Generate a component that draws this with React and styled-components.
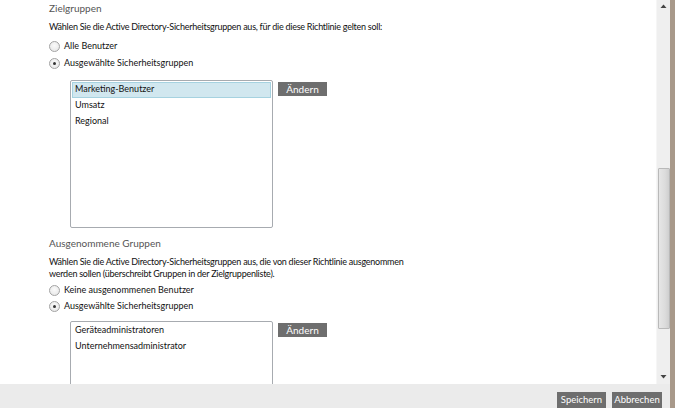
import React from "react";
import styled, { createGlobalStyle } from "styled-components";

const Global = createGlobalStyle`
  html, body { margin: 0; padding: 0; background: #fff; }
  body { font-family: Lato, "Noto Sans", sans-serif; overflow: hidden; }
  * { box-sizing: border-box; }
`;

const Shell = styled.div`
  display: flex;
  width: 675px;
  height: 408px;
`;

const MainColumn = styled.div`
  flex: 1;
  display: flex;
  flex-direction: column;
  min-width: 0;
`;

const ContentRow = styled.div`
  flex: 1;
  display: flex;
  min-height: 0;
`;

const Content = styled.div`
  flex: 1;
  overflow: hidden;
  padding: 0 0 0 49px;
  color: #111;
  font-size: 9px;
`;

const Heading = styled.div`
  color: #555;
  font-size: 10px;
  line-height: 14px;
  margin-top: ${(p) => p.$top}px;
`;

const Description = styled.div`
  margin-top: ${(p) => p.$top}px;
  line-height: 12px;
  white-space: nowrap;
  letter-spacing: -0.25px;
`;

const RadioGroup = styled.div`
  display: flex;
  flex-direction: column;
  gap: ${(p) => p.$gap}px;
  margin-top: ${(p) => p.$top}px;
`;

const RadioRow = styled.label`
  display: flex;
  align-items: center;
  gap: 4px;
  height: 12px;
  line-height: 12px;
`;

const RadioCircle = styled.span`
  width: 11px;
  height: 11px;
  border-radius: 50%;
  border: 1px solid #a3a3a3;
  background: radial-gradient(circle at 50% 40%, #fafafa 0%, #e4e4e4 100%);
  display: flex;
  align-items: center;
  justify-content: center;
  &::after {
    content: "";
    width: 3px;
    height: 3px;
    border-radius: 50%;
    background: ${(p) => (p.$checked ? "#333" : "transparent")};
  }
`;

const ListRow = styled.div`
  display: flex;
  align-items: flex-start;
  gap: 5px;
  margin-top: ${(p) => p.$top}px;
  margin-left: 21px;
`;

const ListBox = styled.div`
  width: 203px;
  height: ${(p) => p.$height}px;
  border: 1px solid #a7abb0;
  border-radius: 2px;
  padding: 1px;
  background: #fff;
  flex-shrink: 0;
`;

const ListItem = styled.div`
  height: 16px;
  line-height: 12px;
  padding-left: 2px;
  border: 1px solid ${(p) => (p.$selected ? "#a6d2e0" : "transparent")};
  background: ${(p) => (p.$selected ? "#d1e7ef" : "transparent")};
`;

const GrayButton = styled.button`
  border: none;
  background: #6e6e6e;
  color: #fff;
  font-family: Lato, "Noto Sans", sans-serif;
  font-size: 10px;
  height: 14px;
  line-height: 14px;
  padding: 0;
  width: ${(p) => p.$width}px;
  margin-top: ${(p) => p.$top || 0}px;
  cursor: pointer;
`;

const ScrollTrack = styled.div`
  width: 14px;
  background: #efefef;
  display: flex;
  flex-direction: column;
  align-items: center;
  padding-top: 2px;
  border-left: 1px solid #f6f6f6;
`;

const ScrollArrow = styled.div`
  height: 9px;
  display: flex;
  align-items: center;
  justify-content: center;
`;

const ScrollSpacer = styled.div`
  height: ${(p) => p.$h}px;
`;

const ScrollThumb = styled.div`
  width: 12px;
  height: 161px;
  border: 1px solid #b9b9b9;
  border-radius: 1px;
  background: linear-gradient(to right, #e6e6e6, #dcdcdc 60%, #cfcfcf);
`;

const Footer = styled.div`
  height: 24px;
  background: #ebebeb;
  display: flex;
  justify-content: flex-end;
  align-items: flex-end;
  gap: 6px;
  padding-right: 8px;
`;

const FooterButton = styled(GrayButton)`
  height: 16px;
  line-height: 16px;
  font-size: 9.5px;
`;

const EdgeStrip = styled.div`
  width: 5px;
  background: #a8998a;
`;

const Arrow = ({ up }) => (
  <svg width="7" height="5" viewBox="0 0 7 5">
    {up ? <path d="M3.5 0.5 L6.5 4 L0.5 4 Z" fill="#444" /> : <path d="M0.5 1 L6.5 1 L3.5 4.5 Z" fill="#444" />}
  </svg>
);

const Radio = ({ checked, children }) => (
  <RadioRow>
    <RadioCircle $checked={checked} />
    <span>{children}</span>
  </RadioRow>
);

export default function App() {
  return (
    <>
      <Global />
      <Shell>
        <MainColumn>
          <ContentRow>
            <Content>
              <Heading $top={1}>Zielgruppen</Heading>
              <Description $top={6}>
                Wählen Sie die Active Directory-Sicherheitsgruppen aus, für die diese Richtlinie gelten soll:
              </Description>
              <RadioGroup $top={7} $gap={5}>
                <Radio>Alle Benutzer</Radio>
                <Radio checked>Ausgewählte Sicherheitsgruppen</Radio>
              </RadioGroup>
              <ListRow $top={11}>
                <ListBox $height={148}>
                  <ListItem $selected>Marketing-Benutzer</ListItem>
                  <ListItem>Umsatz</ListItem>
                  <ListItem>Regional</ListItem>
                </ListBox>
                <GrayButton $width={49} $top={2}>Ändern</GrayButton>
              </ListRow>
              <Heading $top={8}>Ausgenommene Gruppen</Heading>
              <Description $top={6}>
                Wählen Sie die Active Directory-Sicherheitsgruppen aus, die von dieser Richtlinie ausgenommen
                <br />
                werden sollen (überschreibt Gruppen in der Zielgruppenliste).
              </Description>
              <RadioGroup $top={4} $gap={4}>
                <Radio>Keine ausgenommenen Benutzer</Radio>
                <Radio checked>Ausgewählte Sicherheitsgruppen</Radio>
              </RadioGroup>
              <ListRow $top={9}>
                <ListBox $height={148}>
                  <ListItem>Geräteadministratoren</ListItem>
                  <ListItem>Unternehmensadministrator</ListItem>
                </ListBox>
                <GrayButton $width={49} $top={2}>Ändern</GrayButton>
              </ListRow>
            </Content>
            <ScrollTrack>
              <ScrollArrow><Arrow up /></ScrollArrow>
              <ScrollSpacer $h={157} />
              <ScrollThumb />
              <ScrollSpacer $h={43} />
              <ScrollArrow><Arrow /></ScrollArrow>
            </ScrollTrack>
          </ContentRow>
          <Footer>
            <FooterButton $width={49}>Speichern</FooterButton>
            <FooterButton $width={50}>Abbrechen</FooterButton>
          </Footer>
        </MainColumn>
        <EdgeStrip />
      </Shell>
    </>
  );
}
